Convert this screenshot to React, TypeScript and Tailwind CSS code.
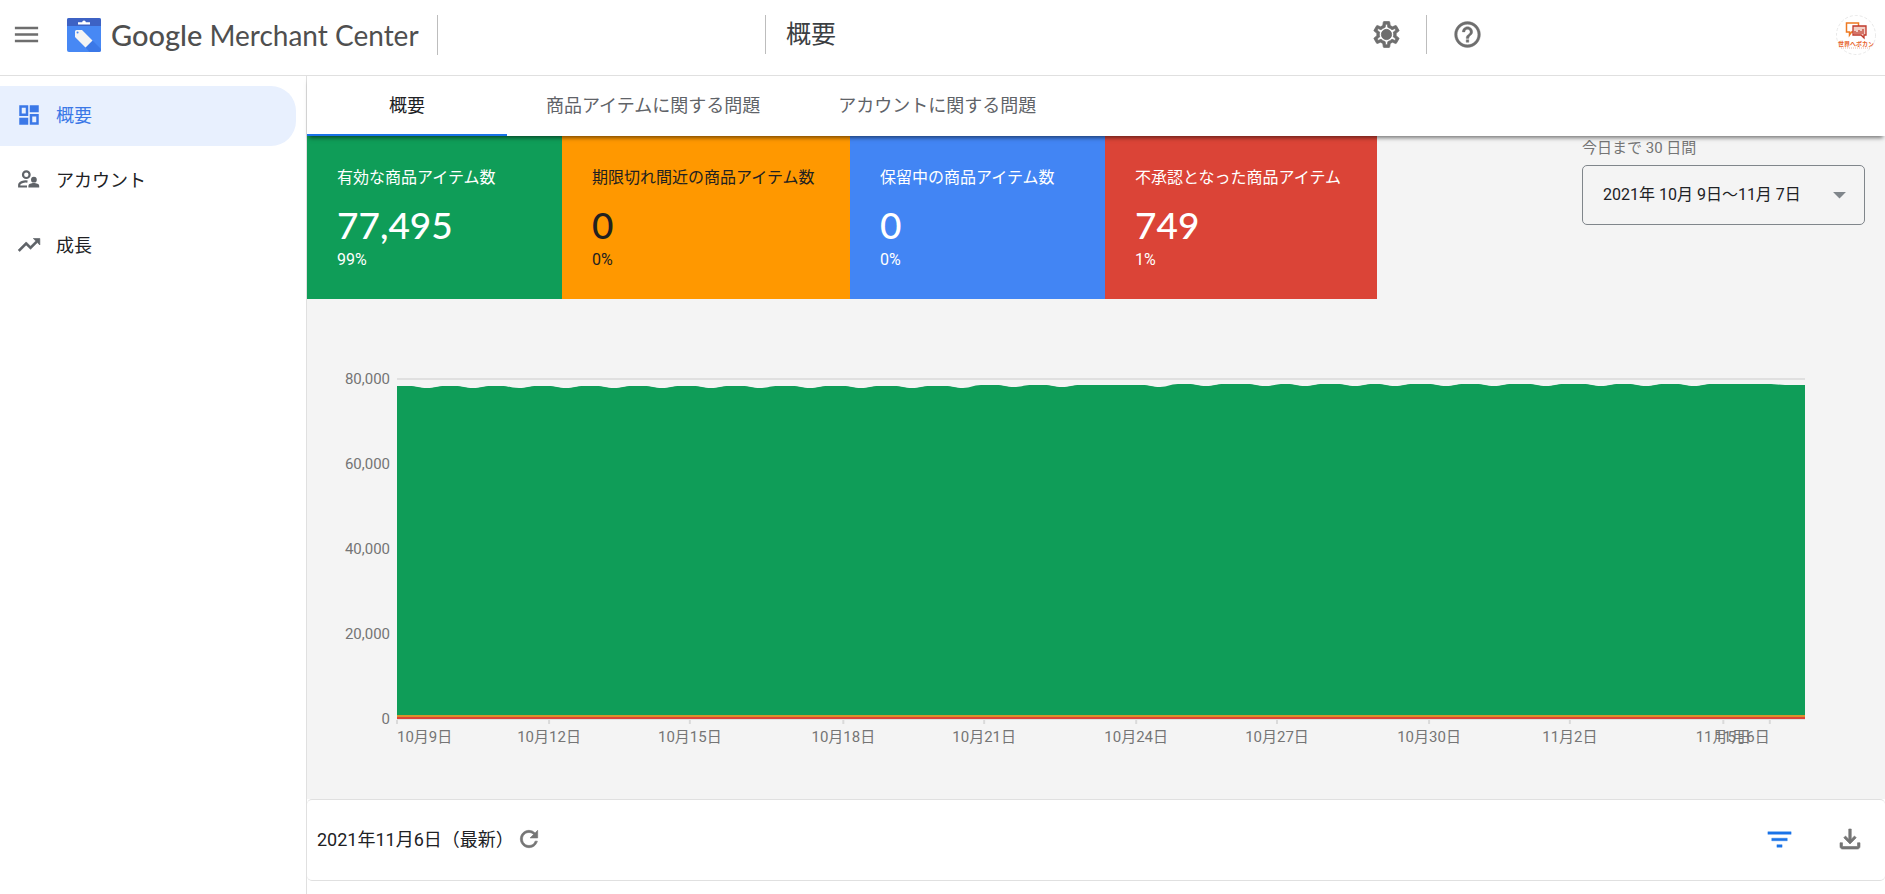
import React from 'react';
import {
  MdArrowDropDown,
  MdFilterList,
  MdHelpOutline,
  MdMenu,
  MdOutlineFileDownload,
  MdOutlineSettings,
  MdRefresh,
  MdTrendingUp,
} from 'react-icons/md';

interface Stat {
  label: string;
  value: string;
  percent: string;
  className: string;
}

const stats: Stat[] = [
  { label: '有効な商品アイテム数', value: '77,495', percent: '99%', className: 'w-[255px] bg-[#0f9d58] text-white' },
  { label: '期限切れ間近の商品アイテム数', value: '0', percent: '0%', className: 'w-[288px] bg-[#ff9800] text-[#212121]' },
  { label: '保留中の商品アイテム数', value: '0', percent: '0%', className: 'w-[255px] bg-[#4285f4] text-white' },
  { label: '不承認となった商品アイテム', value: '749', percent: '1%', className: 'w-[272px] bg-[#db4437] text-white' },
];

const tabs = ['概要', '商品アイテムに関する問題', 'アカウントに関する問題'];

// Horizontal position of each date, in percent of the plot width
const ticks = [
  { label: '10月9日', x: 0, anchor: 'start' as const },
  { label: '10月12日', x: 10.8, anchor: 'middle' as const },
  { label: '10月15日', x: 20.8, anchor: 'middle' as const },
  { label: '10月18日', x: 31.7, anchor: 'middle' as const },
  { label: '10月21日', x: 41.7, anchor: 'middle' as const },
  { label: '10月24日', x: 52.5, anchor: 'middle' as const },
  { label: '10月27日', x: 62.5, anchor: 'middle' as const },
  { label: '10月30日', x: 73.3, anchor: 'middle' as const },
  { label: '11月2日', x: 83.3, anchor: 'middle' as const },
  { label: '11月5日', x: 94.2, anchor: 'middle' as const },
  { label: '11月6日', x: 97.5, anchor: 'end' as const },
];

const PLOT_WIDTH = 1408;
const PLOT_HEIGHT = 340;

// Where the total falls a little, and how high the area stands before each fall
const dips = [30, 76, 122, 169, 217, 265, 314, 363, 413, 464, 515, 566, 617, 665, 763, 809, 868, 908, 958, 998, 1049, 1097, 1149, 1204, 1249, 1297];

const topAt = (x: number) => (x < 570 ? 7 : x < 760 ? 6 : 5);

function areaPath() {
  let d = `M0 ${PLOT_HEIGHT}V7`;
  dips.forEach((x) => {
    const before = topAt(x - 20);
    const after = topAt(x + 20);
    const low = before + 2;
    d += `L${x - 18} ${before}C${x - 10} ${before} ${x - 8} ${low} ${x} ${low}S${x + 10} ${after} ${x + 18} ${after}`;
  });
  return `${d}H1374L1388 6H${PLOT_WIDTH}V${PLOT_HEIGHT}Z`;
}

// Thickens a Material icon; its first path is the empty bounding box
const boldIcon = 'stroke-current [&>path:first-child]:stroke-none';

function DashboardIcon() {
  return (
    <svg viewBox="0 0 24 24" className="size-[26px]" fill="currentColor" aria-hidden="true">
      <path fillRule="evenodd" d="M3 3h8.300v10H3zM5.300 5.300v5.400h3.700V5.300zM12.700 11H21v10h-8.300zM15 13.300v5.400h3.700v-5.400z" />
      <path d="M12.700 3H21v6.500h-8.300zM3 14.500h8.300V21H3z" />
    </svg>
  );
}

function AccountIcon() {
  return (
    <svg viewBox="0 0 26 26" className="size-[26px]" fill="#5f6368" aria-hidden="true">
      <circle cx="10.300" cy="7.700" r="3.300" fill="none" stroke="#5f6368" strokeWidth="2.200" />
      <circle cx="17.900" cy="12.700" r="2.900" />
      <path d="M11.500 14.600c-3.600-.6-8.300.8-8.300 3.400v1.500H11" fill="none" stroke="#5f6368" strokeWidth="2.200" />
      <path d="M12.400 20.600v-1.700c0-1.800 3-2.800 5.400-2.800s5.400 1 5.400 2.800v1.700z" />
    </svg>
  );
}

function Logo() {
  return (
    <svg viewBox="0 0 34 34" className="size-[34px]" aria-hidden="true">
      <rect width="34" height="34" rx="2" fill="#4788f4" />
      <path d="M25.500 22.500l8.500 8.500v1a2 2 0 0 1-2 2H22.500l-4-4.500z" fill="#3b78e7" />
      <path d="M2 0h30a2 2 0 0 1 2 2v6H0V2a2 2 0 0 1 2-2z" fill="#3d62c4" />
      <path d="M11 4.200h4.200a1.800 1.800 0 0 1 3.600 0H23v2.300H11z" fill="#fff" />
      <path fillRule="evenodd" d="M8 13.500a1.500 1.500 0 0 1 1.500-1.500h5.500l10.500 10.500-7 7L8 19zM10.500 13.500a1 1 0 1 0 .1 2 1 1 0 0 0 0-2z" fill="#f4f4f4" />
    </svg>
  );
}

function Avatar() {
  return (
    <svg viewBox="0 0 40 40" className="size-10" aria-hidden="true">
      <circle cx="20" cy="20" r="19.500" fill="#fff" stroke="#e8e8e8" strokeDasharray="3 2" />
      <path d="M10.500 8h12v9h-7l-2 3v-3h-3z" fill="none" stroke="#ee7a22" strokeWidth="1.500" />
      <path d="M17 11h13v9h-2v3l-3-3h-8z" fill="#f3cfc6" stroke="#c0392b" strokeWidth="1.300" />
      <path d="M19 19v-3M21 19v-2M23 19v-4M25 19v-3M27 19v-5" stroke="#c0392b" strokeWidth="1.200" />
      <text x="20" y="31" textAnchor="middle" fontSize="6" fontWeight="700" fill="#e8642c">世界へボカン</text>
      <path d="M5 33h30" stroke="#f0b8a8" strokeWidth="1" strokeDasharray="1 1" />
    </svg>
  );
}

function Header() {
  return (
    <header className="flex h-[76px] shrink-0 items-center border-b border-[#e0e0e0] pb-[21px] pt-[15px] text-[#6e6e6e]">
      <div className="flex w-[765px] shrink-0 items-center">
        <button type="button" aria-label="メニュー" className="ml-[11px]">
          <MdMenu className="size-[31px]" />
        </button>
        <div className="ml-[25px] flex w-[371px] items-center border-r border-[#bdbdbd]">
          <Logo />
          <span className="ml-2.5 font-[Lato] text-[28px] leading-[39px] whitespace-nowrap text-[#4f4f4f]">
            <span className="text-[29px] font-medium">Google</span> Merchant Center
          </span>
        </div>
      </div>
      <h1 className="w-[595px] shrink-0 border-l border-[#bdbdbd] pl-5 text-[25px] leading-[39px] text-[#3c4043]">概要</h1>
      <button type="button" aria-label="設定" className="relative ml-[11px]">
        <MdOutlineSettings className={`size-[31px] ${boldIcon}`} strokeWidth="0.6" />
        <span className="absolute inset-0 m-auto size-2 rounded-full bg-[#6e6e6e]" />
      </button>
      <span className="ml-6 h-[39px] border-l border-[#bdbdbd]" />
      <button type="button" aria-label="ヘルプ" className="ml-[25px]">
        <MdHelpOutline className={`size-[31px] ${boldIcon}`} strokeWidth="0.3" />
      </button>
      <button type="button" aria-label="プロフィール" className="mr-[9px] ml-auto">
        <Avatar />
      </button>
    </header>
  );
}

function Sidebar() {
  const item = 'flex h-[60px] items-center gap-3.5 rounded-r-[25px] pb-0.5 pl-4 text-[18px]';

  return (
    <nav className="flex w-[307px] shrink-0 flex-col gap-[5px] border-r border-[#e0e0e0] pt-2.5 pr-2.5">
      <a href="#overview" className={`${item} bg-[#e8f0fe] text-[#3b78e7]`}>
        <DashboardIcon />
        概要
      </a>
      <a href="#account" className={`${item} text-[#202124]`}>
        <AccountIcon />
        アカウント
      </a>
      <a href="#growth" className={`${item} text-[#202124]`}>
        <MdTrendingUp className={`size-[26px] text-[#5f6368] ${boldIcon}`} strokeWidth="0.6" />
        成長
      </a>
    </nav>
  );
}

function Chart() {
  return (
    <svg className="block h-[370px] w-full overflow-visible" role="img" aria-label="商品アイテム数の推移" fontSize="15" fill="#757575">
      {[80000, 60000, 40000, 20000, 0].map((value, i) => (
        <g key={value}>
          <text x="-7" y={i * 85 + 5} textAnchor="end">{value.toLocaleString('en-US')}</text>
          <rect x="0" y={i * 85 - 1} width="100%" height="2" fill="#e0e0e0" />
        </g>
      ))}
      <svg width="100%" height={PLOT_HEIGHT} viewBox={`0 0 ${PLOT_WIDTH} ${PLOT_HEIGHT}`} preserveAspectRatio="none">
        <path d={areaPath()} fill="#0f9d58" />
        <rect y="336" width={PLOT_WIDTH} height="2" fill="#d9922a" />
        <rect y="338" width={PLOT_WIDTH} height="2" fill="#db4437" />
      </svg>
      {ticks.map((tick) => (
        <g key={tick.label}>
          <line x1={`${tick.x}%`} x2={`${tick.x}%`} y1="341" y2="345" stroke="#dadada" strokeWidth="2" />
          <text x={`${tick.x}%`} y="363" textAnchor={tick.anchor}>{tick.label}</text>
        </g>
      ))}
    </svg>
  );
}

export default function App() {
  return (
    <div lang="ja" className="flex h-screen flex-col overflow-hidden bg-white font-[Roboto,'Noto_Sans_CJK_JP',sans-serif] text-[#202124]">
      <Header />
      <div className="flex min-h-0 flex-1">
        <Sidebar />
        <main className="flex min-w-0 flex-1 flex-col">
          <div role="tablist" className="relative z-10 flex h-[60px] shrink-0 bg-white shadow-[0_4px_4px_-2px_rgba(0,0,0,0.5)]">
            {tabs.map((tab, i) => (
              <button
                key={tab}
                type="button"
                role="tab"
                aria-selected={i === 0}
                className={`min-w-[200px] border-b-2 px-[39px] text-[18px] ${i === 0 ? 'border-[#1a73e8] text-[#202124]' : 'border-transparent text-[#5f6368]'}`}
              >
                {tab}
              </button>
            ))}
          </div>

          <section className="bg-[#f4f4f4] pb-[50px]">
            <div className="flex items-start justify-between">
              <div className="flex">
                {stats.map((stat) => (
                  <div key={stat.label} className={`h-[163px] shrink-0 px-[30px] pt-[30px] ${stat.className}`}>
                    <p className="text-base whitespace-nowrap">{stat.label}</p>
                    <p className="mt-[15px] font-[Lato] text-[37px] leading-10 font-medium">{stat.value}</p>
                    <p className="mt-[5px] text-base leading-5">{stat.percent}</p>
                  </div>
                ))}
              </div>
              <div className="mr-5 w-[283px] shrink-0">
                <label htmlFor="period" className="mb-[5px] block pt-px text-[15px] leading-[23px] text-[#757575]">今日まで 30 日間</label>
                <div className="relative">
                  <select id="period" className="h-[60px] w-full appearance-none rounded-[5px] border border-[#80868b] bg-transparent pl-5 text-base">
                    <option>2021年 10月 9日〜11月 7日</option>
                  </select>
                  <MdArrowDropDown className="pointer-events-none absolute top-[14px] right-2.5 size-[31px] text-[#80868b]" />
                </div>
              </div>
            </div>
            <div className="mt-20 mr-20 ml-[90px]">
              <Chart />
            </div>
          </section>

          <section className="flex h-[82px] shrink-0 items-center rounded-[5px] border-y border-[#e0e0e0] px-2.5 pb-0.5">
            <h2 className="text-[18px]">2021年11月6日（最新）</h2>
            <button type="button" aria-label="更新" className="ml-0.5">
              <MdRefresh className={`size-[26px] text-[#757575] ${boldIcon}`} strokeWidth="0.6" />
            </button>
            <button type="button" aria-label="フィルタ" className="ml-auto">
              <MdFilterList className={`size-[31px] text-[#1a73e8] ${boldIcon}`} strokeWidth="0.3" />
            </button>
            <button type="button" aria-label="ダウンロード" className="mr-2.5 ml-10">
              <MdOutlineFileDownload className={`size-[30px] text-[#757575] ${boldIcon}`} strokeWidth="0.5" />
            </button>
          </section>
        </main>
      </div>
    </div>
  );
}
